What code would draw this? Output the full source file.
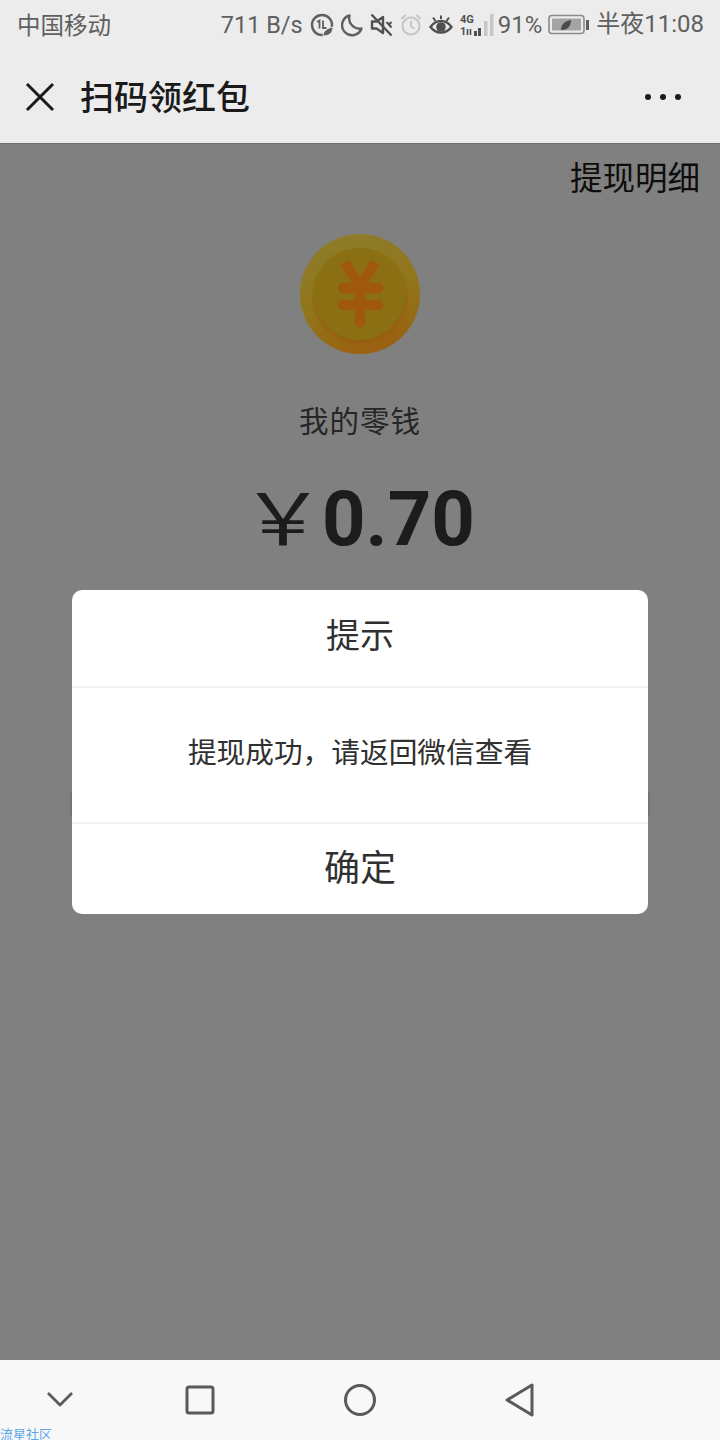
<template>
  <div class="page">
    <div class="top">
      <div class="status">
        <span class="carrier">中国移动</span>
        <div class="status-right">
          <span class="speed">711 B/s</span>
          <svg class="ic" width="24" height="24" viewBox="0 0 24 24">
            <circle cx="12" cy="12" r="10" fill="none" stroke="#5f5f5f" stroke-width="2.400" />
            <path d="M7 9l2.500-1.500v8M13 7.500v7.500h3.500" fill="none" stroke="#5f5f5f" stroke-width="1.800" />
            <path d="M13 23c0-5 4-8 10-9 0 6-4 9-10 9z" fill="#5f5f5f" stroke="#ececec" />
          </svg>
          <svg class="ic" width="22" height="24" viewBox="0 0 22 24">
            <path d="M8.500 2.500a10 10 0 1 0 12 13A10.500 10.500 0 0 1 8.500 2.500z" fill="none" stroke="#5f5f5f" stroke-width="2.400" stroke-linejoin="round" />
          </svg>
          <svg class="ic" width="23" height="24" viewBox="0 0 23 24">
            <path d="M2 8.500h4.500L13 4v16l-6.500-4.500H2z" fill="none" stroke="#505050" stroke-width="2.400" stroke-linejoin="round" />
            <path d="M1.500 1.500l20 21" stroke="#505050" stroke-width="2.400" />
            <path d="M16.500 9l5 5.500M21.500 9l-2.500 2.500" stroke="#505050" stroke-width="2" fill="none" />
          </svg>
          <svg class="ic" width="22" height="24" viewBox="0 0 22 24">
            <circle cx="11" cy="13" r="8.500" fill="none" stroke="#c6c6c6" stroke-width="2.200" />
            <path d="M11 8v5.500l3.500 2" fill="none" stroke="#c6c6c6" stroke-width="2" />
            <path d="M1.500 6l4-4M20.500 6l-4-4" stroke="#c6c6c6" stroke-width="2" />
          </svg>
          <svg class="ic" width="24" height="24" viewBox="0 0 24 24">
            <path d="M1.500 14c5.500-8 15.500-8 21 0-5.500 7.500-15.500 7.500-21 0z" fill="none" stroke="#505050" stroke-width="2.400" />
            <circle cx="12" cy="14" r="4.800" fill="#505050" />
            <path d="M4 4.500l2.500 3.500M12 2.500V6M20 4.500L17.500 8" stroke="#505050" stroke-width="2" />
          </svg>
          <svg class="ic" width="36" height="24" viewBox="0 0 36 24">
            <text x="0" y="9.500" class="net">4G</text>
            <text x="0" y="22" class="net">1</text>
            <path d="M7.500 22v-6M10.500 16v6" stroke="#505050" stroke-width="1.600" />
            <rect x="14" y="18" width="3" height="5" fill="#505050" />
            <rect x="18" y="15" width="3" height="8" fill="#505050" />
            <rect x="24" y="8" width="3.500" height="15" fill="#c6c6c6" />
            <rect x="30" y="1" width="3.500" height="22" fill="#c6c6c6" />
          </svg>
          <span class="pct">91%</span>
          <svg class="ic battery" width="42" height="22" viewBox="0 0 42 22">
            <rect x="1" y="1.500" width="35" height="18" rx="3" fill="none" stroke="#8a8a8a" stroke-width="1.600" />
            <rect x="4" y="4.500" width="29" height="12" fill="#a4a4a4" />
            <rect x="38" y="6" width="3" height="10" fill="#5f5f5f" />
            <path d="M13 16c0-6 4-9 10-10 0 6-3 10-10 10z" fill="#4a4a4a" />
          </svg>
          <span class="clock">半夜11:08</span>
        </div>
      </div>
      <div class="nav">
        <svg class="close" width="30" height="30" viewBox="0 0 30 30">
          <path d="M2 2l26 26M28 2L2 28" stroke="#1a1a1a" stroke-width="3" />
        </svg>
        <span class="title">扫码领红包</span>
        <div class="dots"><i></i><i></i><i></i></div>
      </div>
    </div>

    <div class="main">
      <div class="detail-link">提现明细</div>
      <svg class="coin" width="120" height="120" viewBox="0 0 120 120">
        <defs>
          <linearGradient id="rim" x1="0.300" y1="0" x2="0.600" y2="1">
            <stop offset="0" stop-color="#8d7c2a" />
            <stop offset="0.550" stop-color="#91761a" />
            <stop offset="1" stop-color="#9a6011" />
          </linearGradient>
          <filter id="soft" x="-10%" y="-10%" width="120%" height="120%">
            <feGaussianBlur stdDeviation="1.500" />
          </filter>
        </defs>
        <circle cx="60" cy="60" r="60" fill="url(#rim)" />
        <circle cx="60" cy="63" r="47" fill="#975c10" opacity="0.750" filter="url(#soft)" />
        <circle cx="59.500" cy="60" r="46" fill="#8a7012" />
        <path d="M47 32l13 20 13-20M43 54h35M43 71h35M60 52v36" fill="none" stroke="#a0580f" stroke-width="10.500" stroke-linecap="round" stroke-linejoin="round" />
      </svg>
      <div class="balance-label">我的零钱</div>
      <div class="amount"><span class="yen">￥</span><b>0.70</b></div>
      <div class="withdraw"></div>

      <div class="dialog">
        <div class="dialog-title">提示</div>
        <div class="dialog-body">提现成功，请返回微信查看</div>
        <div class="dialog-btn">确定</div>
      </div>
    </div>

    <div class="bottom">
      <svg width="30" height="20" viewBox="0 0 30 20"><path d="M3 3l12 12L27 3" fill="none" stroke="#5a5a5a" stroke-width="2.800" stroke-linejoin="round" /></svg>
      <svg width="30" height="30" viewBox="0 0 30 30"><rect x="2" y="2" width="26" height="26" rx="2" fill="none" stroke="#5a5a5a" stroke-width="3" /></svg>
      <svg width="34" height="34" viewBox="0 0 34 34"><circle cx="17" cy="17" r="14.500" fill="none" stroke="#5a5a5a" stroke-width="3" /></svg>
      <svg width="32" height="36" viewBox="0 0 32 36"><path d="M28 3v30L3 18z" fill="none" stroke="#5a5a5a" stroke-width="3" stroke-linejoin="round" /></svg>
      <span class="mark">流星社区</span>
    </div>
  </div>
</template>

<style>
html, body {
  margin: 0;
  background: #808080;
}
</style>

<style scoped>
.page {
  position: relative;
  width: 720px;
  height: 1440px;
  display: flex;
  flex-direction: column;
  overflow: hidden;
  font-family: "Noto Sans CJK SC", "Roboto", sans-serif;
}

.top {
  background: #ececec;
  height: 144px;
  flex: none;
  border-bottom: 1px solid #6f6f6f;
  box-sizing: border-box;
}

.status {
  height: 50px;
  display: flex;
  align-items: center;
  justify-content: space-between;
  padding: 0 16px 0 17px;
  color: #5f5f5f;
}

.carrier {
  font-size: 23.500px;
  line-height: 48px;
  margin-bottom: 2px;
}

.status-right {
  display: flex;
  align-items: center;
  gap: 7px;
}

.speed,
.pct,
.clock {
  font-family: Roboto, "Noto Sans CJK SC", sans-serif;
  font-size: 24px;
}

.speed {
  font-size: 23.500px;
}

.pct {
  margin-left: -5px;
}

.battery {
  margin-left: -1px;
}

.clock {
  margin-left: -1px;
  line-height: 30px;
  margin-bottom: 3px;
}

.ic {
  flex: none;
}

.net {
  font: 700 11px Roboto, sans-serif;
  fill: #505050;
}

.nav {
  height: 93px;
  display: flex;
  align-items: center;
  padding: 0 39px 0 25px;
}

.close {
  margin-right: 25px;
}

.title {
  font-size: 34px;
  line-height: 44px;
  margin-bottom: 2px;
  font-weight: 500;
  color: #1a1a1a;
  flex: 1;
}

.dots {
  display: flex;
  gap: 9px;
}

.dots i {
  width: 6px;
  height: 6px;
  border-radius: 50%;
  background: #1a1a1a;
}

.main {
  position: relative;
  flex: 1;
  background: #808080;
  display: flex;
  flex-direction: column;
  align-items: center;
}

.detail-link {
  align-self: flex-end;
  margin: 10px 20px 0 0;
  font-size: 32.500px;
  line-height: 44px;
  color: #0d0d0d;
}

.coin {
  margin-top: 36px;
}

.balance-label {
  margin-top: 43px;
  font-size: 29.500px;
  line-height: 44px;
  letter-spacing: 1px;
  color: #262626;
}

.amount {
  align-self: stretch;
  margin-top: 33px;
  padding-left: 247px;
  display: flex;
  align-items: center;
  color: #1c1c1c;
  line-height: 90px;
}

.yen {
  font-size: 72px;
  font-weight: 400;
  transform: translateY(-5px) scaleX(1.180);
}

.amount b {
  font-family: Roboto, sans-serif;
  font-size: 76px;
  font-weight: 700;
  margin-left: 3px;
}

.withdraw {
  position: absolute;
  top: 646px;
  left: 70px;
  width: 580px;
  height: 28px;
  border-radius: 4px;
  background: #767568;
}

.dialog {
  position: absolute;
  top: 446px;
  left: 72px;
  width: 576px;
  background: #fff;
  border-radius: 10px;
  text-align: center;
  color: #303030;
}

.dialog-title {
  height: 98px;
  line-height: 88px;
  font-size: 34px;
  border-bottom: 2px solid #f3f3f3;
  box-sizing: border-box;
}

.dialog-body {
  height: 136px;
  line-height: 126px;
  font-size: 28.700px;
  border-bottom: 2px solid #f3f3f3;
  box-sizing: border-box;
}

.dialog-btn {
  height: 90px;
  line-height: 82px;
  font-size: 36px;
}

.bottom {
  position: relative;
  height: 80px;
  flex: none;
  background: #f8f8f8;
  display: grid;
  grid-template-columns: 120px 160px 160px 160px;
  align-items: center;
  justify-items: center;
}

.mark {
  position: absolute;
  left: 0;
  bottom: 0;
  font-size: 13px;
  line-height: 13px;
  color: #5aa8ea;
}
</style>
